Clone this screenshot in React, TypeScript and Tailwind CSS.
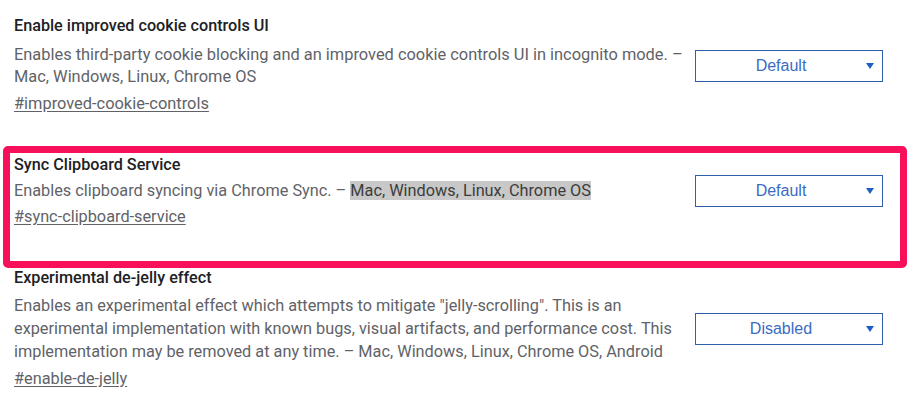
import React from "react";

const FONT = "font-['Roboto','Liberation_Sans',sans-serif]";

function Select({ value }: { value: string }) {
  return (
    <div className="relative flex h-[32px] w-[188px] shrink-0 items-center justify-center border border-[#2d5fae] bg-white pr-[16px]">
      <span className="font-['Liberation_Sans',Arial,sans-serif] text-[16px] text-[#3a6cc4]">{value}</span>
      <span className="absolute right-[8px] top-[12px] h-0 w-0 border-x-[4px] border-t-[6px] border-x-transparent border-t-[#1d5fc6]" />
    </div>
  );
}

export default function App() {
  return (
    <div className={`h-[418px] w-[921px] overflow-hidden bg-white ${FONT}`}>
      {/* cookie controls */}
      <div className="w-[883px] pl-[14px] pt-[16px]">
        <h3 className="text-[16.2px] leading-[20px] font-medium text-[#202124]">Enable improved cookie controls UI</h3>
        <div className="mt-[8px] flex items-center justify-between">
          <p className="w-[672px] text-[16.4px] leading-[22px] text-[#5f6368]">
            Enables third-party cookie blocking and an improved cookie controls UI in incognito mode. – Mac, Windows, Linux, Chrome OS
          </p>
          <Select value="Default" />
        </div>
        <a className="mt-[5px] block w-fit text-[16.4px] leading-[22px] text-[#5f6368] underline underline-offset-2">#improved-cookie-controls</a>
      </div>

      {/* highlighted: clipboard sync */}
      <div className="ml-[3px] mt-[31px] h-[122px] w-[904px] rounded-[5px] border-[7px] border-[#f9105a] pl-[4px] pr-[17px] pt-[2px]">
        <h3 className="text-[16.2px] leading-[20px] font-medium text-[#202124]">Sync Clipboard Service</h3>
        <div className="mt-[4px] flex h-[23px] items-center justify-between">
          <p className="w-[672px] text-[16.3px] leading-[23px] text-[#5f6368]">
            Enables clipboard syncing via Chrome Sync. –{" "}
            <span className="bg-[#c8c8c8] text-[#3c3c3c]">Mac, Windows, Linux, Chrome OS</span>
          </p>
          <Select value="Default" />
        </div>
        <a className="mt-[4px] block w-fit text-[16.3px] leading-[22px] text-[#5f6368] underline underline-offset-2">#sync-clipboard-service</a>
      </div>

      {/* de-jelly */}
      <div className="w-[883px] pl-[14px]">
        <h3 className="text-[16.2px] leading-[20px] font-medium text-[#202124]">Experimental de-jelly effect</h3>
        <div className="mt-[6px] flex items-center justify-between">
          <p className="w-[672px] text-[16.3px] leading-[23px] text-[#5f6368]">
            Enables an experimental effect which attempts to mitigate "jelly-scrolling". This is an experimental implementation with known bugs, visual artifacts, and performance cost. This implementation may be removed at any time. – Mac, Windows, Linux, Chrome OS, Android
          </p>
          <Select value="Disabled" />
        </div>
        <a className="mt-[5px] block w-fit text-[16.3px] leading-[22px] text-[#5f6368] underline underline-offset-2">#enable-de-jelly</a>
      </div>
    </div>
  );
}
